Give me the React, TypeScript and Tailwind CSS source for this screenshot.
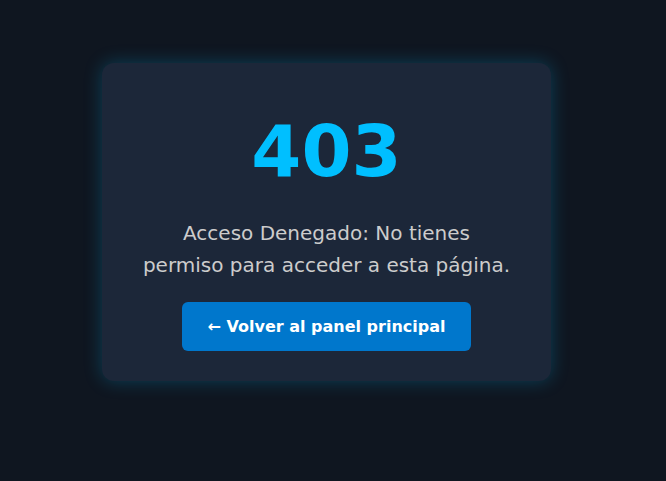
export default function App() {
  return (
    <div
      className="w-full h-[481px] bg-[#0f1620] flex justify-center pt-[63px] pr-[13px]"
      style={{ fontFamily: '"DejaVu Sans", sans-serif' }}
    >
      <div className="w-[449px] h-[318px] rounded-[12px] bg-[#1c2739] shadow-[0_0_18px_rgba(0,191,255,0.25)] flex flex-col items-center pt-[52px]">
        <h1 className="text-[72px] leading-[72px] font-bold text-[#00bfff]">403</h1>
        <p className="mt-[30px] w-[390px] text-center text-[20px] leading-[32px] text-[#cccccc]">
          Acceso Denegado: No tienes
          <br />
          permiso para acceder a esta página.
        </p>
        <button className="mt-[21px] h-[49px] px-[25px] rounded-[6px] bg-[#0077cc] text-white font-bold text-[16px]">
          ← Volver al panel principal
        </button>
      </div>
    </div>
  );
}
